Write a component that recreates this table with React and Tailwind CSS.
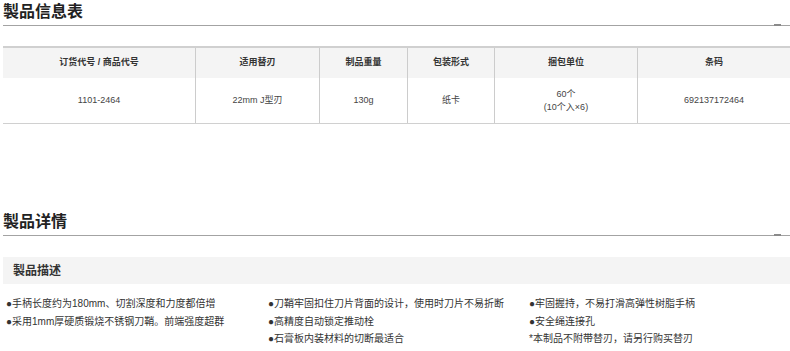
import React from 'react'

const cols = [
  { head: '订货代号 / 商品代号', body: ['1101-2464'] },
  { head: '适用替刃', body: ['22mm J型刃'] },
  { head: '制品重量', body: ['130g'] },
  { head: '包装形式', body: ['纸卡'] },
  { head: '捆包单位', body: ['60个', '(10个入×6)'] },
  { head: '条码', body: ['692137172464'] },
]

const features = [
  ['●手柄长度约为180mm、切割深度和力度都倍增', '●采用1mm厚硬质锻烧不锈钢刀鞘。前端强度超群'],
  ['●刀鞘牢固扣住刀片背面的设计，使用时刀片不易折断', '●高精度自动锁定推动栓', '●石膏板内装材料的切断最适合'],
  ['●牢固握持，不易打滑高弹性树脂手柄', '●安全绳连接孔', '*本制品不附带替刃，请另行购买替刃'],
]

function SectionTitle({ children, className }) {
  return (
    <div className={className}>
      <h2 className='text-[16px] leading-[22px] font-bold text-[#222]'>{children}</h2>
      <div className='relative mt-[2px] h-px bg-[#a3a3a3]'>
        <span className='absolute right-[9px] top-[-1px] w-[7px] h-[2px] bg-[#8a8a8a]'></span>
      </div>
    </div>
  )
}

export default function App() {
  return (
    <div className="w-[790px] h-[351px] overflow-hidden bg-white pl-[3px] font-['Liberation_Sans','Noto_Sans_CJK_SC',sans-serif]">
      <SectionTitle className='pt-[1px]'>製品信息表</SectionTitle>

      {/* spec table */}
      <div className='mt-[20px] grid grid-cols-[192px_124px_88px_87px_143px_153px] border-t-2 border-b border-[#d0d0d0]'>
        {cols.map((c, i) => (
          <div key={'h' + i} className={'h-[30px] flex items-center justify-center bg-[#f4f4f4] text-[9px] font-bold text-[#333] ' + (i > 0 ? 'border-l border-[#cccccc]' : '')}>
            {c.head}
          </div>
        ))}
        {cols.map((c, i) => (
          <div key={'b' + i} className={'h-[45px] flex flex-col items-center justify-center text-[9px] leading-[13px] text-[#444] ' + (i > 0 ? 'border-l border-[#cccccc]' : '')}>
            {c.body.map((t) => <span key={t}>{t}</span>)}
          </div>
        ))}
      </div>

      <SectionTitle className='mt-[87px]'>製品详情</SectionTitle>

      <div className='mt-[21px] h-[27px] flex items-center bg-[#f4f4f4] pl-[10px] text-[12px] font-bold text-[#333]'>
        製品描述
      </div>

      <div className='mt-[11px] pl-[3px] flex'>
        {features.map((list, i) => (
          <div key={i} className={i === 0 ? 'w-[262px]' : 'w-[261px]'}>
            {list.map((t) => (
              <p key={t} className='text-[10px] leading-[17.5px] text-[#333] whitespace-nowrap'>{t}</p>
            ))}
          </div>
        ))}
      </div>
    </div>
  )
}
